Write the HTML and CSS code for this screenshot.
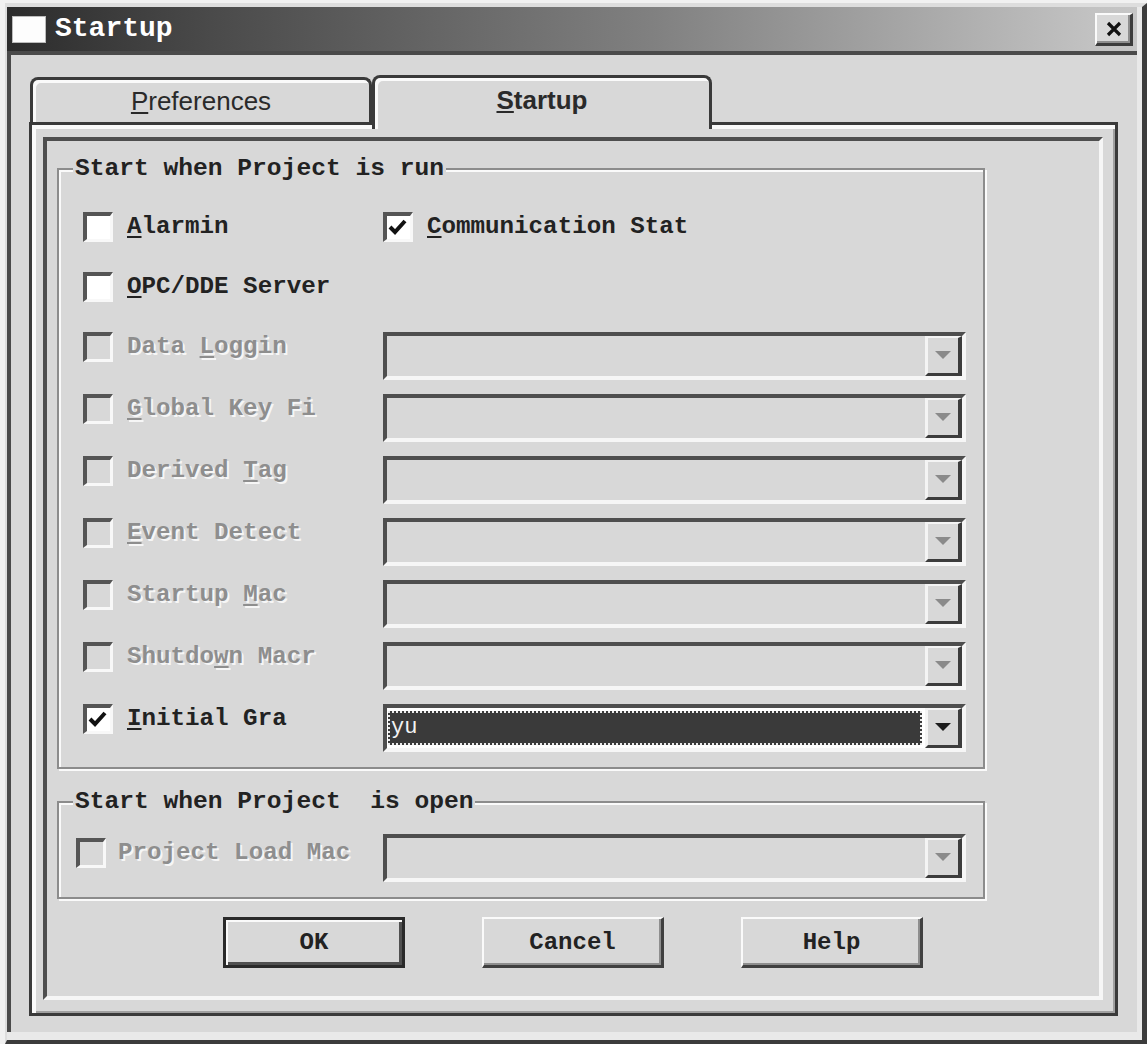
FILE: index.html
```html
<!DOCTYPE html>
<html lang="en">
<head>
<meta charset="utf-8">
<title>Startup</title>
<link rel="stylesheet" href="styles.css">
</head>
<body>
<div class="window">
  <div class="titlebar">
    <div class="app-icon"></div>
    <div class="title">Startup</div>
    <div class="close-btn">
      <svg width="18" height="16" viewBox="0 0 18 16"><path d="M3 2 L15 14 M15 2 L3 14" stroke="#111" stroke-width="3.2" fill="none"/></svg>
    </div>
  </div>
  <div class="client">
    <div class="tabs">
      <div class="tab"><span><u>P</u>references</span></div>
      <div class="tab tab-active"><span><u>S</u>tartup</span></div>
    </div>
    <div class="panel">
      <div class="frame">
        <fieldset class="group g1">
          <legend>Start when Project is run</legend>
          <div class="group-body">
            <div class="row row-plain">
              <div class="check">
                <span class="box"></span>
                <span class="label"><u>A</u>larmin</span>
              </div>
              <div class="check">
                <span class="box"><svg width="22" height="20" viewBox="0 0 22 20"><path d="M3 9 L8 14 L18 3" stroke="#111" stroke-width="4" fill="none"/></svg></span>
                <span class="label"><u>C</u>ommunication Stat</span>
              </div>
            </div>
            <div class="row row-plain">
              <div class="check">
                <span class="box"></span>
                <span class="label"><u>O</u>PC/DDE Server</span>
              </div>
            </div>
            <div class="row">
              <div class="check">
                <span class="box off"></span>
                <span class="label dim">Data <u>L</u>oggin</span>
              </div>
              <div class="combo"><div class="combo-field"></div><div class="combo-btn"><svg width="16" height="9" viewBox="0 0 16 9"><polygon points="0,0 16,0 8,8" class="arrow-dim"/></svg></div></div>
            </div>
            <div class="row">
              <div class="check">
                <span class="box off"></span>
                <span class="label dim"><u>G</u>lobal Key Fi</span>
              </div>
              <div class="combo"><div class="combo-field"></div><div class="combo-btn"><svg width="16" height="9" viewBox="0 0 16 9"><polygon points="0,0 16,0 8,8" class="arrow-dim"/></svg></div></div>
            </div>
            <div class="row">
              <div class="check">
                <span class="box off"></span>
                <span class="label dim">Derived <u>T</u>ag</span>
              </div>
              <div class="combo"><div class="combo-field"></div><div class="combo-btn"><svg width="16" height="9" viewBox="0 0 16 9"><polygon points="0,0 16,0 8,8" class="arrow-dim"/></svg></div></div>
            </div>
            <div class="row">
              <div class="check">
                <span class="box off"></span>
                <span class="label dim"><u>E</u>vent Detect</span>
              </div>
              <div class="combo"><div class="combo-field"></div><div class="combo-btn"><svg width="16" height="9" viewBox="0 0 16 9"><polygon points="0,0 16,0 8,8" class="arrow-dim"/></svg></div></div>
            </div>
            <div class="row">
              <div class="check">
                <span class="box off"></span>
                <span class="label dim">Startup <u>M</u>ac</span>
              </div>
              <div class="combo"><div class="combo-field"></div><div class="combo-btn"><svg width="16" height="9" viewBox="0 0 16 9"><polygon points="0,0 16,0 8,8" class="arrow-dim"/></svg></div></div>
            </div>
            <div class="row">
              <div class="check">
                <span class="box off"></span>
                <span class="label dim">Shutdo<u>w</u>n Macr</span>
              </div>
              <div class="combo"><div class="combo-field"></div><div class="combo-btn"><svg width="16" height="9" viewBox="0 0 16 9"><polygon points="0,0 16,0 8,8" class="arrow-dim"/></svg></div></div>
            </div>
            <div class="row">
              <div class="check">
                <span class="box"><svg width="22" height="20" viewBox="0 0 22 20"><path d="M3 9 L8 14 L18 3" stroke="#111" stroke-width="4" fill="none"/></svg></span>
                <span class="label"><u>I</u>nitial Gra</span>
              </div>
              <div class="combo combo-on"><div class="combo-field combo-sel">yu</div><div class="combo-btn"><svg width="16" height="9" viewBox="0 0 16 9"><polygon points="0,0 16,0 8,8" class="arrow-on"/></svg></div></div>
            </div>
          </div>
        </fieldset>
        <fieldset class="group g2">
          <legend>Start when Project &nbsp;is open</legend>
          <div class="group-body">
            <div class="row">
              <div class="check">
                <span class="box off"></span>
                <span class="label dim">Project Load Mac</span>
              </div>
              <div class="combo"><div class="combo-field"></div><div class="combo-btn"><svg width="16" height="9" viewBox="0 0 16 9"><polygon points="0,0 16,0 8,8" class="arrow-dim"/></svg></div></div>
            </div>
          </div>
        </fieldset>
        <div class="buttons">
          <button class="btn btn-default">OK</button>
          <button class="btn">Cancel</button>
          <button class="btn">Help</button>
        </div>
      </div>
    </div>
  </div>
</div>
</body>
</html>
```
FILE: styles.css
```css
* { box-sizing: border-box; }

body {
  margin: 0;
  background: #f1f1f1;
  font-family: "Liberation Mono", "Courier New", monospace;
}

.window {
  margin: 3px 0 0 5px;
  width: 1142px;
  height: 1041px;
  background: #e9e9e9;
  border-top: 4px solid #dddddd;
  border-left: 2px solid #dddddd;
  border-right: 5px solid #3c3c3c;
  border-bottom: 4px solid #3c3c3c;
  padding: 0 5px 8px 0;
  display: flex;
  flex-direction: column;
}

.titlebar {
  flex: none;
  height: 44px;
  display: flex;
  align-items: center;
  padding: 0 4px 0 5px;
  background: linear-gradient(to right, #2c2c2c 0%, #4a4a4a 18%, #808080 57%, #c2c2c2 96%, #c6c6c6 100%);
}

.app-icon {
  width: 34px;
  height: 27px;
  background: #fdfdfd;
  border: 1px solid #bcbcbc;
}

.title {
  margin-left: 9px;
  color: #fff;
  font-weight: bold;
  font-size: 28px;
  line-height: 30px;
}

.close-btn {
  margin-left: auto;
  width: 38px;
  height: 33px;
  background: #d8d8d8;
  border-style: solid;
  border-width: 2px 3px 3px 2px;
  border-color: #fafafa #3c3c3c #3c3c3c #fafafa;
  box-shadow: inset -2px -2px 0 #8e8e8e;
  display: flex;
  align-items: center;
  justify-content: center;
}

.client {
  flex: 1;
  background: #d8d8d8;
  border-top: 4px solid #4a4a4a;
  border-left: 4px solid #4a4a4a;
  padding: 20px 19px 16px 18px;
}

.tabs {
  display: flex;
  align-items: flex-end;
  height: 47px;
  margin-left: 1px;
}

.tab {
  width: 342px;
  height: 45px;
  border: 3px solid #3a3a3a;
  border-bottom: 0;
  border-radius: 8px 8px 0 0;
  box-shadow: inset 3px 3px 0 #fafafa;
  display: flex;
  align-items: center;
  justify-content: center;
  font-family: "Liberation Sans", Arial, sans-serif;
  font-size: 26px;
  color: #2a2a2a;
}

.tab-active {
  width: 340px;
  height: 54px;
  margin-bottom: -7px;
  padding-bottom: 7px;
  position: relative;
  z-index: 1;
  background: #d8d8d8;
  font-weight: bold;
}

.panel {
  height: 894px;
  border: 3px solid #3a3a3a;
  box-shadow: inset 4px 4px 0 #fafafa, inset -2px -2px 0 #a0a0a0;
  padding: 12px 12px 13px 11px;
}

.frame {
  height: 100%;
  border-style: solid;
  border-width: 4px;
  border-color: #4e4e4e #f6f6f6 #f6f6f6 #4e4e4e;
  padding-left: 10px;
}

.group {
  width: 928px;
  min-width: 0;
  margin: 14px 0 0 0;
  padding: 0;
  border: 2px solid #8c8c8c;
  box-shadow: inset 2px 2px 0 #fafafa, 2px 2px 0 #fafafa;
}

.g2 { margin-top: 19px; }

.group legend {
  margin-left: 14px;
  padding: 0 2px;
  background: #d8d8d8;
  font-size: 24.6px;
  line-height: 28px;
  font-weight: bold;
  color: #222;
  white-space: pre;
}

.group-body {
  padding: 29px 0 1px 24px;
}

.g2 .group-body {
  padding: 18px 0 15px 17px;
}

.row {
  display: grid;
  grid-template-columns: 300px 583px;
  align-items: start;
  height: 62px;
}

.row-plain { height: 60px; }

.g2 .row {
  grid-template-columns: 307px 583px;
  height: 48px;
}

.check {
  display: flex;
  align-items: center;
  gap: 14px;
  height: 30px;
}

.g2 .check {
  gap: 12px;
  margin-top: 4px;
}

.box {
  flex: none;
  width: 30px;
  height: 30px;
  border-style: solid;
  border-width: 4px 3px 3px 4px;
  border-color: #555 #f8f8f8 #f8f8f8 #555;
  background: #fff;
  display: flex;
  align-items: center;
  justify-content: flex-start;
}

.box.off { background: #d8d8d8; }

.label {
  font-size: 24.2px;
  line-height: 30px;
  font-weight: bold;
  color: #222;
  white-space: nowrap;
}

.label.dim {
  color: #8e8e8e;
  text-shadow: 2px 2px 0 #f6f6f6;
}

.label u {
  text-decoration-thickness: 2px;
  text-underline-offset: 3px;
}

.combo {
  width: 583px;
  height: 48px;
  border-style: solid;
  border-width: 4px;
  border-color: #4e4e4e #f6f6f6 #f6f6f6 #4e4e4e;
  background: #d8d8d8;
  display: flex;
}

.combo-on { background: #fff; }

.combo-field { flex: 1; }

.combo-sel {
  margin: 3px 3px 3px 1px;
  background: #3a3a3a;
  border: 2px dotted #ececec;
  color: #f2f2f2;
  font-size: 22px;
  line-height: 28px;
  padding-left: 1px;
  display: flex;
  align-items: center;
}

.combo-btn {
  flex: none;
  width: 37px;
  border-style: solid;
  border-width: 2px 4px 3px 3px;
  border-color: #f4f4f4 #3c3c3c #3c3c3c #f4f4f4;
  background: #d8d8d8;
  display: flex;
  align-items: center;
  justify-content: center;
}

.arrow-dim { fill: #8a8a8a; }
.arrow-on { fill: #1c1c1c; }

.buttons {
  display: flex;
  justify-content: center;
  gap: 77px;
  margin: 18px 0 0 -10px;
}

.btn {
  width: 182px;
  height: 51px;
  margin: 0;
  padding: 0;
  border-style: solid;
  border-width: 2px 3px 3px 2px;
  border-color: #fafafa #404040 #404040 #fafafa;
  background: #d8d8d8;
  box-shadow: inset -2px -2px 0 #8e8e8e;
  font-family: "Liberation Mono", "Courier New", monospace;
  font-size: 24px;
  font-weight: bold;
  color: #222;
  display: flex;
  align-items: center;
  justify-content: center;
}

.btn-default {
  border: 3px solid #2a2a2a;
  box-shadow: inset 2px 2px 0 #fafafa, inset -3px -3px 0 #505050;
}
```
